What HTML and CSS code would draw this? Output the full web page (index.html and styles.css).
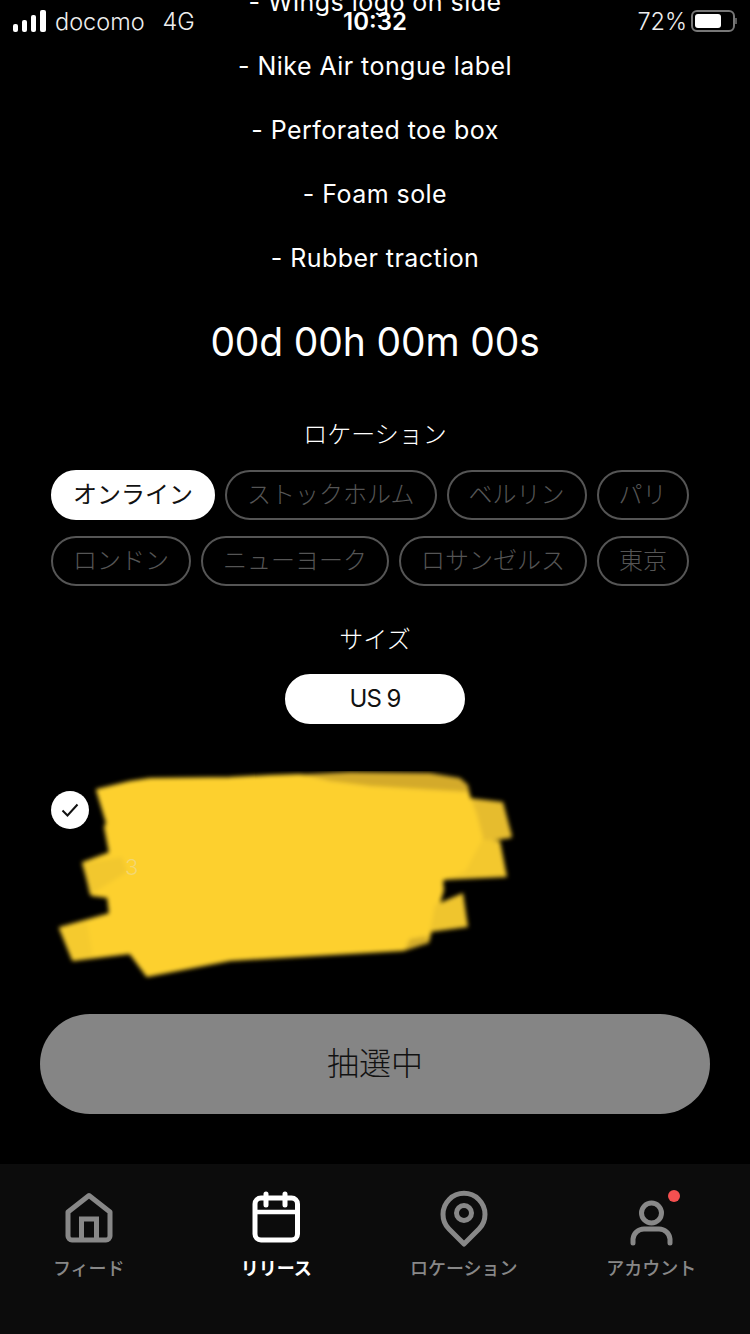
FILE: index.html
```html
<!DOCTYPE html>
<html lang="ja">
<head>
<meta charset="utf-8">
<title>Release</title>
<link rel="stylesheet" href="styles.css">
</head>
<body>
<div class="app">
  <header class="status">
    <div class="status-left">
      <svg class="signal" width="34" height="22" viewBox="0 0 34 22"><rect x="0" y="14" width="5" height="8" rx="2"/><rect x="9" y="10" width="5" height="12" rx="2"/><rect x="18" y="5" width="5" height="17" rx="2"/><rect x="27" y="0" width="6" height="22" rx="2"/></svg>
      <span>docomo</span><span class="net">4G</span>
    </div>
    <div class="status-time">10:32</div>
    <div class="status-right">
      <span>72%</span>
      <svg class="battery" width="46" height="24" viewBox="0 0 46 24"><rect x="1" y="2" width="42" height="20" rx="5" fill="none" stroke="#777" stroke-width="2"/><rect x="4" y="5" width="26" height="14" rx="3" fill="#fff"/><path d="M45 9v6" stroke="#777" stroke-width="1.500" fill="none"/></svg>
    </div>
  </header>

  <main class="content">
    <ul class="specs">
      <li>- Wings logo on side</li>
      <li>- Nike Air tongue label</li>
      <li>- Perforated toe box</li>
      <li>- Foam sole</li>
      <li>- Rubber traction</li>
    </ul>
    <div class="timer">00d 00h 00m 00s</div>

    <h2 class="label label-location">ロケーション</h2>
    <div class="pills">
      <span class="pill on">オンライン</span>
      <span class="pill">ストックホルム</span>
      <span class="pill">ベルリン</span>
      <span class="pill">パリ</span>
      <span class="pill">ロンドン</span>
      <span class="pill">ニューヨーク</span>
      <span class="pill">ロサンゼルス</span>
      <span class="pill">東京</span>
    </div>

    <h2 class="label label-size">サイズ</h2>
    <div class="size-row"><span class="pill on size">US 9</span></div>

    <div class="consent">
      <span class="check">
        <svg width="20" height="16" viewBox="0 0 20 16"><path d="M2.500 8.500l5 5L17.500 2.500" fill="none" stroke="#111" stroke-width="2"/></svg>
      </span>
      <svg class="scribble" width="490" height="220" viewBox="37 771 490 220">
        <defs><filter id="soft" x="-5%" y="-5%" width="110%" height="110%"><feGaussianBlur stdDeviation="2.200"/></filter></defs>
        <g filter="url(#soft)">
          <path fill="#d4aa2b" d="M290 775L350 772 430 773 460 778 468 785 470 795 370 790 323 785z"/>
          <path fill="#e6bc2d" d="M460 797L503 802 512 836 511 838 490 841 470 835z"/>
          <path fill="#f3c82e" d="M460 836L500 841 507 877 440 880 450 860z"/>
          <path fill="#fdd02f" stroke="#fdd02f" stroke-width="2" stroke-linejoin="round" d="M97 790L130 782 150 779 230 778 270 776 300 775 330 782 370 787 468 793 476 815 482 838 465 870 442 880 443 890 440 900 432 925 428 942 403 950 230 960 147 976 130 953 73 960 60 928 110 914 108 897 92 895 83 863 110 853 105 827 107 823z"/>
          <path fill="#efc52e" d="M435 905L463 893 468 927 430 932z"/>
          <path fill="#d5ad2b" d="M410 939L427 936 428 943 405 949z"/>
          <path fill="#f2c72e" d="M83 863L122 857 127 872 90 895z"/>
          <path fill="#f5ca2e" d="M60 928L87 922 93 958 73 960z"/>
        </g>
      </svg>
      <span class="faint">3</span>
    </div>

    <button class="action"><span class="action-text">抽選中</span></button>
  </main>

  <nav class="tabs">
    <div class="tabs-grid">
      <div class="tab">
        <svg width="60" height="60" viewBox="0 0 60 60"><path d="M30 7.500L9 24v24a4 4 0 0 0 4 4h34a4 4 0 0 0 4-4V24z" fill="none" stroke="#888" stroke-width="5" stroke-linejoin="round"/><path d="M22.500 52V31h15v21" fill="none" stroke="#888" stroke-width="5"/></svg>
        <span>フィード</span>
      </div>
      <div class="tab active">
        <svg width="60" height="60" viewBox="0 0 60 60"><rect x="9" y="10" width="42.500" height="42" rx="6" fill="none" stroke="#fff" stroke-width="5"/><path d="M9 24h42.500" stroke="#fff" stroke-width="4.500" fill="none"/><path d="M20 6v11M39 6v11" stroke="#fff" stroke-width="5" fill="none" stroke-linecap="round"/></svg>
        <span>リリース</span>
      </div>
      <div class="tab">
        <svg width="60" height="60" viewBox="0 0 60 60"><path d="M30 56L15 41A21 21 0 1 1 45 41z" fill="none" stroke="#888" stroke-width="5" stroke-linejoin="round"/><circle cx="30" cy="25" r="7.500" fill="none" stroke="#888" stroke-width="5"/></svg>
        <span>ロケーション</span>
      </div>
      <div class="tab">
        <svg width="60" height="60" viewBox="0 0 60 60"><circle cx="30.500" cy="25" r="10" fill="none" stroke="#888" stroke-width="5"/><path d="M12 55v-4a11 11 0 0 1 11-10h15a11 11 0 0 1 11 10v4" fill="none" stroke="#888" stroke-width="5" stroke-linecap="round"/></svg>
        <span>アカウント</span>
        <i class="dot"></i>
      </div>
    </div>
  </nav>
</div>
</body>
</html>
```
FILE: styles.css
```css
* { box-sizing: border-box; }
html, body { margin: 0; padding: 0; background: #000; }
body { font-family: Inter, "Noto Sans CJK JP", sans-serif; color: #fff; }

.app {
  position: relative;
  width: 750px;
  height: 1334px;
  overflow: hidden;
  display: flex;
  flex-direction: column;
  background: #000;
}

/* status bar lies over the scrolled content */
.status {
  position: absolute;
  top: 0;
  left: 0;
  right: 0;
  height: 42px;
  padding: 0 13px 0 13px;
  display: grid;
  grid-template-columns: 1fr auto 1fr;
  align-items: center;
  font-size: 23.500px;
  font-family: "Inter", sans-serif;
  font-weight: 300;
  color: #eee;
}
.status-left { display: flex; align-items: center; gap: 8px; }
.net { margin-left: 10px; }
.signal { fill: #fff; }
.status-time { font-weight: 600; color: #fff; font-size: 24px; }
.status-right { display: flex; align-items: center; justify-content: flex-end; gap: 4px; }

.content {
  flex: 1;
  min-height: 0;
  overflow: hidden;
  display: flex;
  flex-direction: column;
  align-items: center;
}

.specs {
  list-style: none;
  margin: -30px 0 0;
  padding: 0;
  width: 100%;
  text-align: center;
  font-size: 25px;
  letter-spacing: 0.45px;
  font-weight: 400;
}
.specs li { height: 64px; line-height: 64px; }

.timer {
  margin-top: 27px;
  height: 50px;
  line-height: 50px;
  font-size: 39px;
  letter-spacing: -0.15px;
  font-weight: 400;
  text-align: center;
}

.label {
  margin: 0;
  height: 32px;
  line-height: 32px;
  font-size: 24px;
  font-weight: 300;
  text-align: center;
}
.label-location { margin-top: 52px; }
.label-size { margin-top: 38px; }

.pills {
  margin-top: 19px;
  width: 100%;
  padding: 0 40px 0 51px;
  display: flex;
  flex-wrap: wrap;
  justify-content: flex-start;
  gap: 16px 10px;
}
.pill {
  height: 50px;
  line-height: 46px;
  padding: 0 20px;
  border: 2px solid #555;
  border-radius: 25px;
  font-size: 24px;
  font-weight: 300;
  color: #555;
  white-space: nowrap;
}
.pill.on {
  background: #fff;
  border-color: #fff;
  color: #111;
  font-weight: 400;
}
.size-row { margin-top: 18px; }
.pill.size {
  display: block;
  width: 180px;
  text-align: center;
  padding: 0;
  letter-spacing: -1px;
  font-size: 24px;
}

.consent {
  position: relative;
  width: 100%;
  height: 38px;
  margin-top: 67px;
  padding-left: 51px;
}
.check {
  width: 38px;
  height: 38px;
  border-radius: 50%;
  background: #fff;
  display: flex;
  align-items: center;
  justify-content: center;
}
.scribble {
  position: absolute;
  left: 37px;
  top: -20px;
}
.faint {
  position: absolute;
  left: 125px;
  top: 63px;
  font-size: 22px;
  font-weight: 300;
  color: #f3d772;
}

.action {
  margin-top: 185px;
  width: 670px;
  height: 100px;
  padding: 0 0 6px;
  border: 0;
  border-radius: 50px;
  background: #858585;
  color: #111;
  font-family: inherit;
  font-size: 32px;
  font-weight: 300;
}

.tabs {
  height: 170px;
  flex: none;
  background: #0c0c0c;
  padding-top: 24px;
  overflow: hidden;
}
.tabs-grid {
  margin-left: -5px;
  display: grid;
  grid-template-columns: repeat(4, 187.5px);
}
.tab {
  position: relative;
  display: flex;
  flex-direction: column;
  align-items: center;
  color: #888;
  font-size: 18px;
  font-weight: 500;
}
.tab span { margin-top: 9px; line-height: 24px; height: 24px; letter-spacing: 0; }
.tab.active { color: #fff; font-weight: 700; }
.dot {
  position: absolute;
  left: 110px;
  top: 2px;
  width: 12px;
  height: 12px;
  border-radius: 50%;
  background: #f55050;
}
```
